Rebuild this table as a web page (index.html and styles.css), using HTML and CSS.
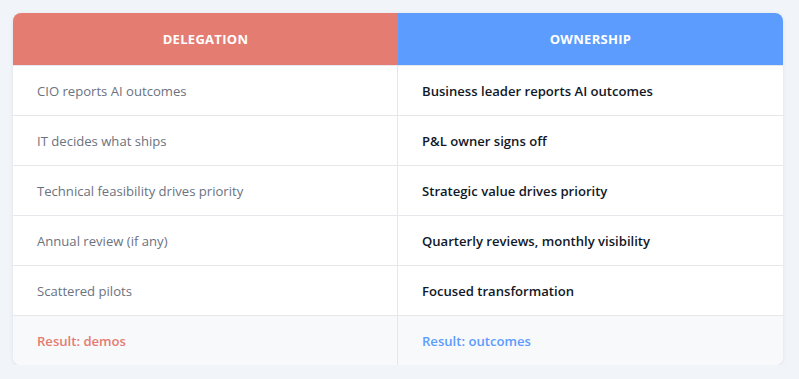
FILE: index.html
```html
<!DOCTYPE html>
<html>
<head>
<meta charset="utf-8">
<link rel="stylesheet" href="styles.css">
</head>
<body>
<div class="card">
  <div class="row head">
    <div class="cell del">DELEGATION</div>
    <div class="cell own">OWNERSHIP</div>
  </div>
  <div class="row">
    <div class="cell l">CIO reports AI outcomes</div>
    <div class="cell r">Business leader reports AI outcomes</div>
  </div>
  <div class="row">
    <div class="cell l">IT decides what ships</div>
    <div class="cell r">P&amp;L owner signs off</div>
  </div>
  <div class="row">
    <div class="cell l">Technical feasibility drives priority</div>
    <div class="cell r">Strategic value drives priority</div>
  </div>
  <div class="row">
    <div class="cell l">Annual review (if any)</div>
    <div class="cell r">Quarterly reviews, monthly visibility</div>
  </div>
  <div class="row">
    <div class="cell l">Scattered pilots</div>
    <div class="cell r">Focused transformation</div>
  </div>
  <div class="row result">
    <div class="cell l res-del">Result: demos</div>
    <div class="cell r res-own">Result: outcomes</div>
  </div>
</div>
</body>
</html>
```
FILE: styles.css
```css
* { box-sizing: border-box; }
body {
  margin: 0;
  background: #f1f4f9;
  font-family: "Open Sans", sans-serif;
  padding: 13px 16px 0 13px;
}
.card {
  width: 770px;
  background: #fff;
  border-radius: 8px;
  overflow: hidden;
  box-shadow: 0 1px 4px rgba(15, 23, 42, 0.08);
}
.row {
  display: grid;
  grid-template-columns: 385px 385px;
  border-top: 1px solid #e5e7eb;
}
.row.head { border-top: none; }
.cell {
  height: 49px;
  display: flex;
  align-items: center;
  padding-left: 24px;
  font-size: 13.1px;
}
.row.head .cell {
  height: 52px;
  justify-content: center;
  padding-left: 0;
  color: #fff;
  font-weight: 700;
  font-size: 13px;
  letter-spacing: 0.3px;
}
.del { background: #e47c72; }
.own { background: #5c9cff; }
.l { color: #6b7280; border-right: 1px solid #e5e7eb; }
.r { color: #111827; font-weight: 600; }
.result { background: #f8f9fb; }
.result .cell { font-weight: 600; }
.res-del { color: #e47c72; }
.res-own { color: #5c9cff; }
```
